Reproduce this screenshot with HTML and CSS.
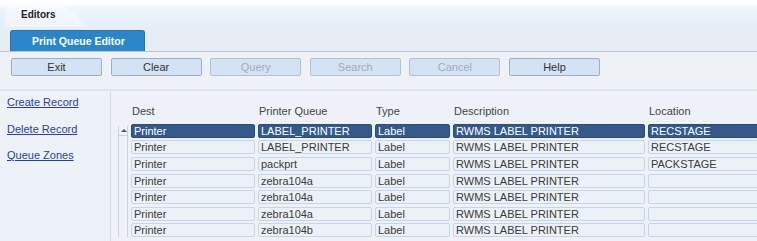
FILE: index.html
```html
<!DOCTYPE html>
<html lang="en">
<head>
    <meta charset="UTF-8">
    <title>Print Queue Editor</title>
    <link rel="stylesheet" href="styles.css">
</head>
<body>
    <div class="tabbar">
        <div class="tab">Editors</div>
    </div>
    <div class="titlebar">
        <div class="titleButton">Print Queue Editor</div>
    </div>
    <div class="actions">
        <button class="actButton">Exit</button>
        <button class="actButton">Clear</button>
        <button class="actButton" disabled>Query</button>
        <button class="actButton" disabled>Search</button>
        <button class="actButton" disabled>Cancel</button>
        <button class="actButton">Help</button>
    </div>
    <div class="main">
        <div class="sidebar">
            <a href="#">Create Record</a>
            <a href="#">Delete Record</a>
            <a href="#">Queue Zones</a>
        </div>
        <div class="panel">
            <div class="table">
                <div></div>
                <div class="head">Dest</div>
                <div class="head">Printer Queue</div>
                <div class="head">Type</div>
                <div class="head">Description</div>
                <div class="head">Location</div>

                <div class="scroll"><div class="upArrow"></div></div>

                <div class="cell sel">Printer</div>
                <div class="cell sel">LABEL_PRINTER</div>
                <div class="cell sel">Label</div>
                <div class="cell sel">RWMS LABEL PRINTER</div>
                <div class="cell sel">RECSTAGE</div>

                <div class="cell">Printer</div>
                <div class="cell">LABEL_PRINTER</div>
                <div class="cell">Label</div>
                <div class="cell">RWMS LABEL PRINTER</div>
                <div class="cell">RECSTAGE</div>

                <div class="cell">Printer</div>
                <div class="cell">packprt</div>
                <div class="cell">Label</div>
                <div class="cell">RWMS LABEL PRINTER</div>
                <div class="cell">PACKSTAGE</div>

                <div class="cell">Printer</div>
                <div class="cell">zebra104a</div>
                <div class="cell">Label</div>
                <div class="cell">RWMS LABEL PRINTER</div>
                <div class="cell"></div>

                <div class="cell">Printer</div>
                <div class="cell">zebra104a</div>
                <div class="cell">Label</div>
                <div class="cell">RWMS LABEL PRINTER</div>
                <div class="cell"></div>

                <div class="cell">Printer</div>
                <div class="cell">zebra104a</div>
                <div class="cell">Label</div>
                <div class="cell">RWMS LABEL PRINTER</div>
                <div class="cell"></div>

                <div class="cell">Printer</div>
                <div class="cell">zebra104b</div>
                <div class="cell">Label</div>
                <div class="cell">RWMS LABEL PRINTER</div>
                <div class="cell"></div>
            </div>
        </div>
    </div>
</body>
</html>
```

FILE: styles.css
```css
body {
    margin: 0;
    font-family: 'Liberation Sans', Arial, sans-serif;
    font-size: 11px;
    color: #333;
    background-color: #edf1f7;
    overflow: hidden;
}

.tabbar {
    height: 27px;
    box-sizing: border-box;
    padding: 5px 0 0 5px;
    background: linear-gradient(#ffffff 0, #ffffff 3px, #eef5fc 8px, #e4eef9 27px);
}

.tab {
    width: 83px;
    height: 22px;
    box-sizing: border-box;
    padding-left: 16px;
    line-height: 19px;
    font-size: 10px;
    font-weight: bold;
    color: #222;
    background: linear-gradient(#f7fafe, #eef4fb);
    clip-path: polygon(0 0, 60px 0, 100% 100%, 0 100%);
    border-top-left-radius: 3px;
}

.titlebar {
    height: 25px;
    box-sizing: border-box;
    padding: 3px 0 0 10px;
    background-color: #e8edf5;
    border-bottom: 1px solid #b9c5d3;
}

.titleButton {
    width: 135px;
    height: 21px;
    box-sizing: border-box;
    padding-left: 21px;
    line-height: 20px;
    font-size: 10.5px;
    font-weight: bold;
    color: #fff;
    background-color: #2b85c9;
    border: 1px solid #2474b3;
    border-bottom: none;
    border-radius: 3px 3px 0 0;
}

.actions {
    display: flex;
    gap: 8.6px;
    height: 39px;
    box-sizing: border-box;
    padding: 6px 0 0 11px;
    background-color: #eef2f7;
    border-bottom: 2px solid #dde4ee;
}

.actButton {
    width: 91px;
    height: 18px;
    padding: 0;
    font-family: 'Liberation Sans', Arial, sans-serif;
    font-size: 11px;
    color: #333;
    background-color: #d4e3f3;
    border: 1px solid #9eafc2;
    border-radius: 2px;
}

.actButton:disabled {
    color: #a3abb4;
    border-color: #b4c1cf;
}

.main {
    display: flex;
    height: 150px;
}

.sidebar {
    width: 111px;
    padding: 4px 0 0 7px;
    box-sizing: border-box;
    border-right: 1px solid #d3dce8;
    background-color: #edf1f8;
}

.sidebar a {
    display: block;
    line-height: 14px;
    margin-bottom: 12.6px;
    color: #2a3ea3;
    text-decoration: underline;
}

.panel {
    flex: 1;
    padding: 13px 0 0 7px;
    background-color: #eef2f8;
    overflow: hidden;
}

.table {
    display: grid;
    grid-template-columns: 10px 124px 114px 75px 192px 130px;
    grid-template-rows: 17px repeat(7, 14px);
    column-gap: 3px;
    row-gap: 2.65px;
}

.head {
    line-height: 14px;
    padding-left: 1px;
    color: #444;
}

.scroll {
    grid-row: 2 / span 7;
    margin-top: 2px;
    border-left: 1px solid #c9d4e2;
    border-right: 1px solid #c9d4e2;
}

.upArrow {
    height: 9px;
    border-bottom: 1px solid #c9d4e2;
    position: relative;
}

.upArrow::after {
    content: "";
    position: absolute;
    left: 2px;
    top: 3px;
    border-left: 3px solid transparent;
    border-right: 3px solid transparent;
    border-bottom: 3px solid #555;
}

.cell {
    box-sizing: border-box;
    height: 14px;
    line-height: 12px;
    padding-left: 2px;
    white-space: nowrap;
    overflow: hidden;
    color: #3a3a3a;
    background-color: #ecf1f7;
    border: 1px solid #c6d5e8;
    border-radius: 2px;
}

.cell.sel {
    color: #fff;
    background-color: #36598b;
    border-color: #2d4c78;
}
```
